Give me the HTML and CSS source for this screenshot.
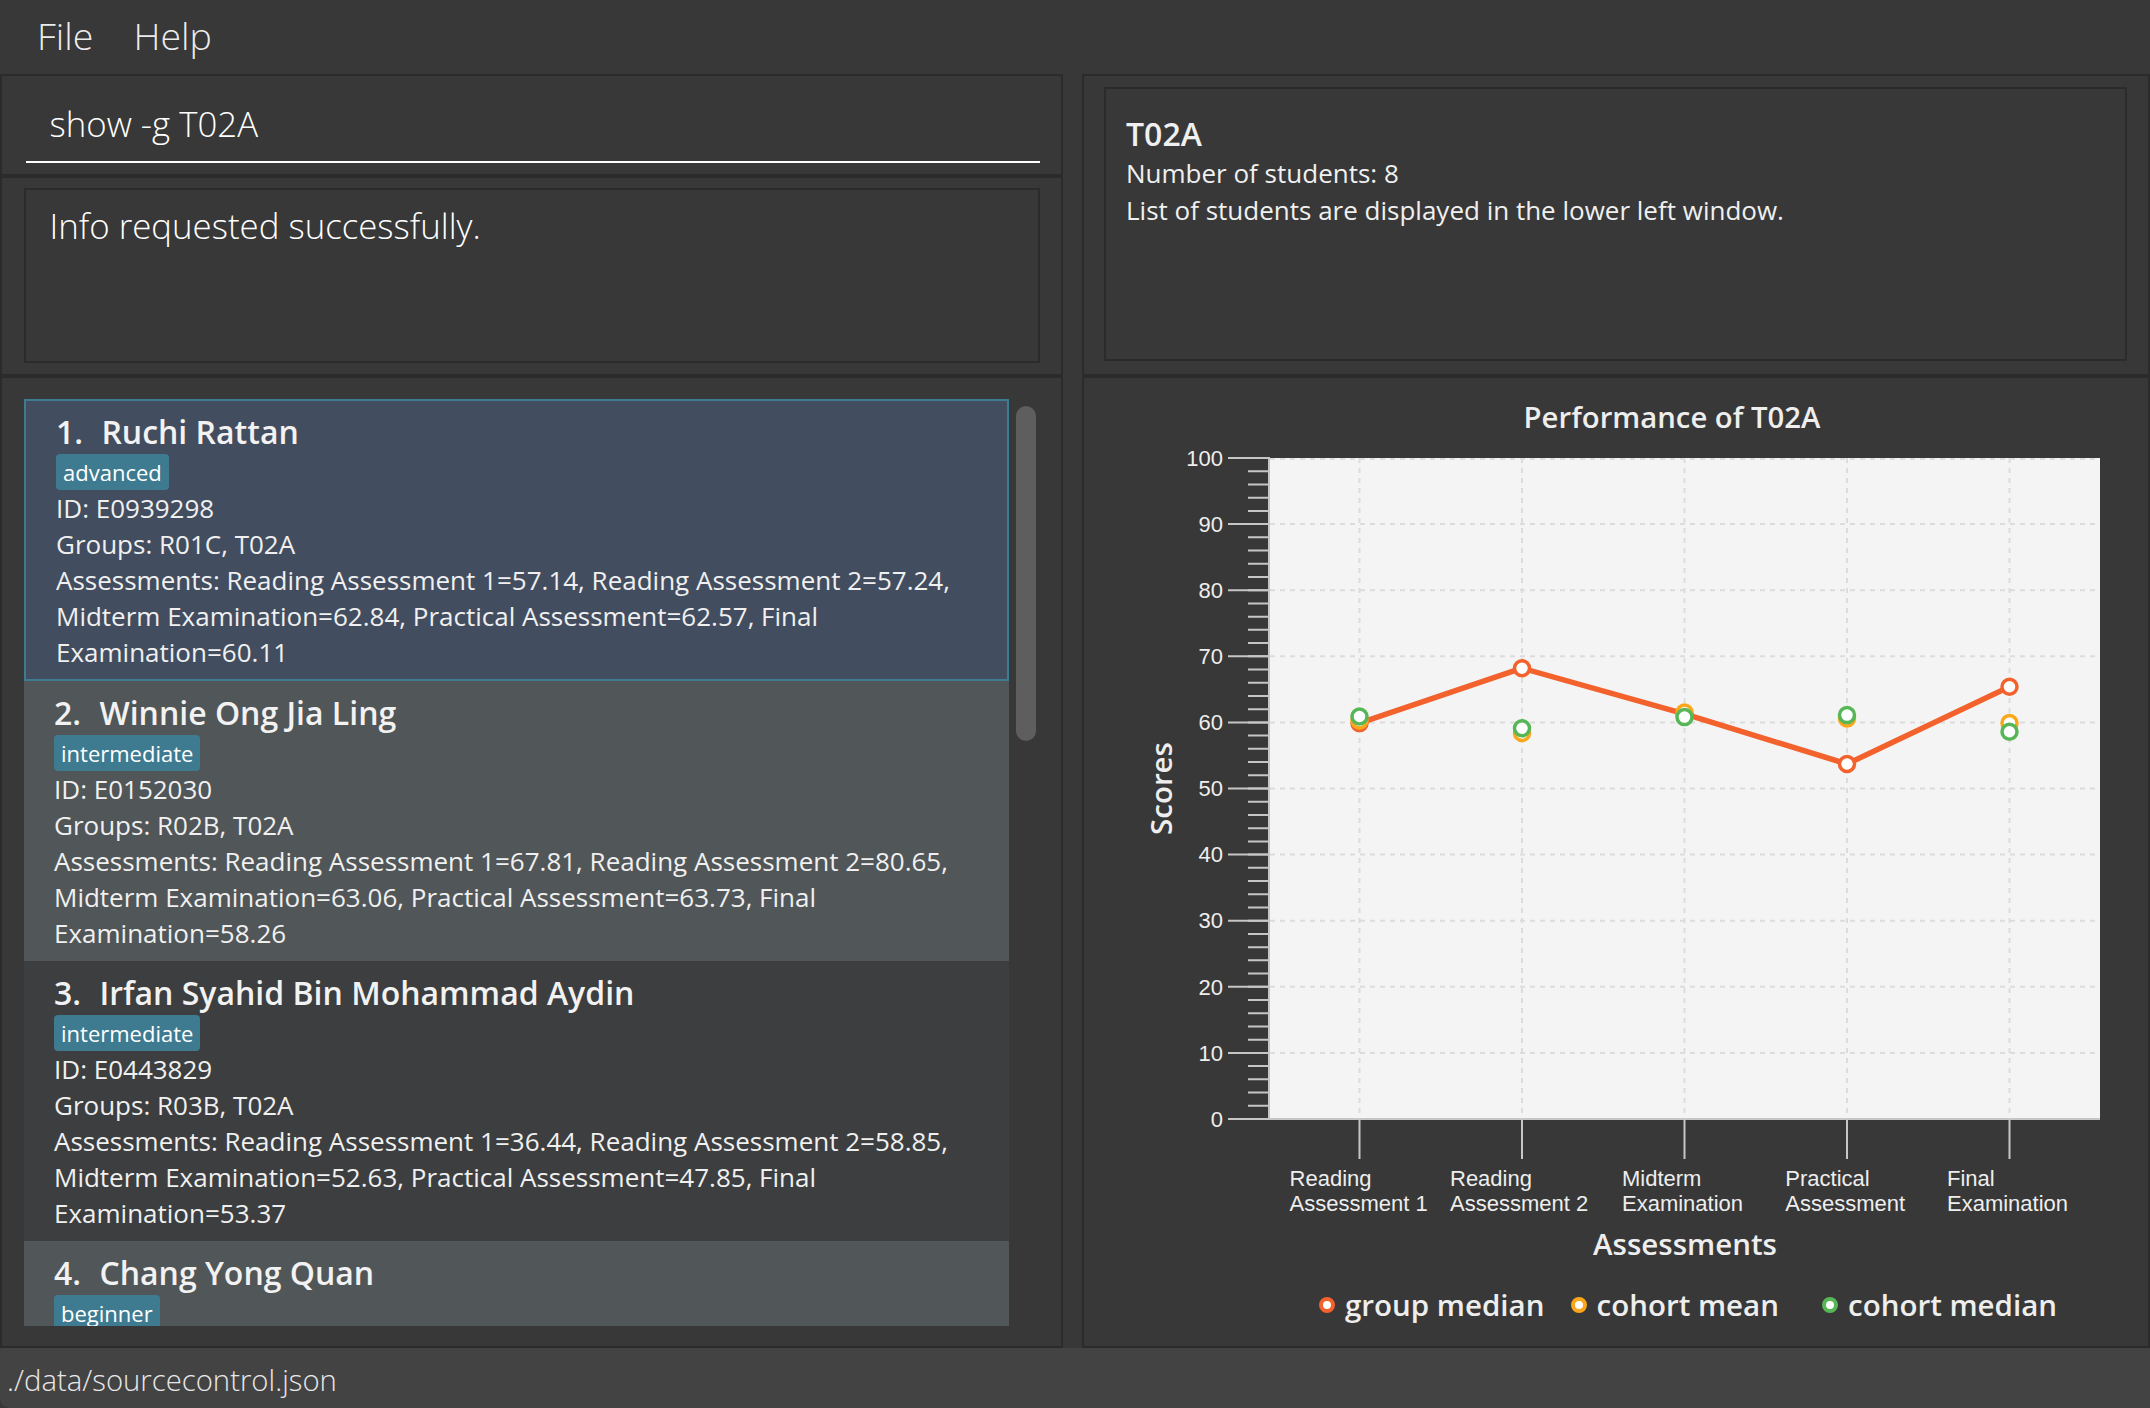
FILE: index.html
```html
<!DOCTYPE html>
<html>
<head>
<meta charset="utf-8">
<title>Source Control</title>
<link rel="stylesheet" href="styles.css">
</head>
<body>
<div class="app">
  <div class="menubar">
    <span class="menu-item">File</span>
    <span class="menu-item">Help</span>
  </div>
  <div class="main">
    <div class="left-col">
      <div class="pane cmd-pane">
        <div class="cmd-input">show -g T02A</div>
      </div>
      <div class="pane result-pane">
        <div class="result-box">Info requested successfully.</div>
      </div>
      <div class="pane list-pane">
        <div class="list-view">
          <div class="cards">
            <div class="card selected">
              <div class="card-name"><span class="idx">1. </span><span class="nm">Ruchi Rattan</span></div>
              <div class="tags"><span class="tag">advanced</span></div>
              <div class="card-line">ID: E0939298</div>
              <div class="card-line">Groups: R01C, T02A</div>
              <div class="card-line">Assessments: Reading Assessment 1=57.14, Reading Assessment 2=57.24,<br>Midterm Examination=62.84, Practical Assessment=62.57, Final<br>Examination=60.11</div>
            </div>
            <div class="card odd">
              <div class="card-name"><span class="idx">2. </span><span class="nm">Winnie Ong Jia Ling</span></div>
              <div class="tags"><span class="tag">intermediate</span></div>
              <div class="card-line">ID: E0152030</div>
              <div class="card-line">Groups: R02B, T02A</div>
              <div class="card-line">Assessments: Reading Assessment 1=67.81, Reading Assessment 2=80.65,<br>Midterm Examination=63.06, Practical Assessment=63.73, Final<br>Examination=58.26</div>
            </div>
            <div class="card even">
              <div class="card-name"><span class="idx">3. </span><span class="nm">Irfan Syahid Bin Mohammad Aydin</span></div>
              <div class="tags"><span class="tag">intermediate</span></div>
              <div class="card-line">ID: E0443829</div>
              <div class="card-line">Groups: R03B, T02A</div>
              <div class="card-line">Assessments: Reading Assessment 1=36.44, Reading Assessment 2=58.85,<br>Midterm Examination=52.63, Practical Assessment=47.85, Final<br>Examination=53.37</div>
            </div>
            <div class="card odd">
              <div class="card-name"><span class="idx">4. </span><span class="nm">Chang Yong Quan</span></div>
              <div class="tags"><span class="tag">beginner</span></div>
            </div>
          </div>
          <div class="scroll-track"><div class="scroll-thumb"></div></div>
        </div>
      </div>
    </div>
    <div class="right-col">
      <div class="pane info-pane">
        <div class="info-box">
          <div class="info-title">T02A</div>
          <div class="info-line">Number of students: 8</div>
          <div class="info-line">List of students are displayed in the lower left window.</div>
        </div>
      </div>
      <div class="pane chart-pane">
        <div class="chart-title">Performance of T02A</div>
        <svg class="chart-svg" width="1064" height="833" viewBox="0 0 1064 833" xmlns="http://www.w3.org/2000/svg">
          <rect x="186" y="21" width="830" height="661" fill="#f4f4f4"/>
          <g stroke="#dcdcdc" stroke-width="2" stroke-dasharray="5 5">
            <line x1="186" y1="615.9" x2="1016" y2="615.9"/>
            <line x1="186" y1="549.8" x2="1016" y2="549.8"/>
            <line x1="186" y1="483.7" x2="1016" y2="483.7"/>
            <line x1="186" y1="417.6" x2="1016" y2="417.6"/>
            <line x1="186" y1="351.5" x2="1016" y2="351.5"/>
            <line x1="186" y1="285.4" x2="1016" y2="285.4"/>
            <line x1="186" y1="219.3" x2="1016" y2="219.3"/>
            <line x1="186" y1="153.2" x2="1016" y2="153.2"/>
            <line x1="186" y1="87.1" x2="1016" y2="87.1"/>
            <line x1="186" y1="22" x2="1016" y2="22"/>
            <line x1="275.5" y1="21" x2="275.5" y2="682"/>
            <line x1="438" y1="21" x2="438" y2="682"/>
            <line x1="600.5" y1="21" x2="600.5" y2="682"/>
            <line x1="763" y1="21" x2="763" y2="682"/>
            <line x1="925.5" y1="21" x2="925.5" y2="682"/>
          </g>
          <g stroke="#c6c6c6" stroke-width="2">
            <line x1="175" y1="682" x2="175" y2="20" stroke-width="22" stroke-dasharray="2 11.22" stroke-dashoffset="1"/>
            <line x1="144" y1="682" x2="186" y2="682"/>
            <line x1="144" y1="615.9" x2="186" y2="615.9"/>
            <line x1="144" y1="549.8" x2="186" y2="549.8"/>
            <line x1="144" y1="483.7" x2="186" y2="483.7"/>
            <line x1="144" y1="417.6" x2="186" y2="417.6"/>
            <line x1="144" y1="351.5" x2="186" y2="351.5"/>
            <line x1="144" y1="285.4" x2="186" y2="285.4"/>
            <line x1="144" y1="219.3" x2="186" y2="219.3"/>
            <line x1="144" y1="153.2" x2="186" y2="153.2"/>
            <line x1="144" y1="87.1" x2="186" y2="87.1"/>
            <line x1="144" y1="21" x2="186" y2="21"/>
            <line x1="185" y1="20" x2="185" y2="683"/>
            <line x1="184" y1="682" x2="1016" y2="682"/>
            <line x1="275.5" y1="682" x2="275.5" y2="722"/>
            <line x1="438" y1="682" x2="438" y2="722"/>
            <line x1="600.5" y1="682" x2="600.5" y2="722"/>
            <line x1="763" y1="682" x2="763" y2="722"/>
            <line x1="925.5" y1="682" x2="925.5" y2="722"/>
          </g>
          <g class="tick-label" text-anchor="end">
            <text x="139" y="689.7">0</text>
            <text x="139" y="623.6">10</text>
            <text x="139" y="557.5">20</text>
            <text x="139" y="491.4">30</text>
            <text x="139" y="425.3">40</text>
            <text x="139" y="359.2">50</text>
            <text x="139" y="293.1">60</text>
            <text x="139" y="227">70</text>
            <text x="139" y="160.9">80</text>
            <text x="139" y="94.8">90</text>
            <text x="139" y="28.7">100</text>
          </g>
          <g class="tick-label">
            <text x="205.6" y="748.5">Reading</text>
            <text x="205.6" y="774">Assessment 1</text>
            <text x="366" y="748.5">Reading</text>
            <text x="366" y="774">Assessment 2</text>
            <text x="538" y="748.5">Midterm</text>
            <text x="538" y="774">Examination</text>
            <text x="701.3" y="748.5">Practical</text>
            <text x="701.3" y="774">Assessment</text>
            <text x="863" y="748.5">Final</text>
            <text x="863" y="774">Examination</text>
          </g>
          <text class="axis-label" x="601" y="818" text-anchor="middle">Assessments</text>
          <text class="axis-label" x="88" y="351.5" text-anchor="middle" transform="rotate(-90 88 351.5)">Scores</text>
          <polyline points="275.5,286.1 438,231.2 600.5,276.8 763,327 925.5,249.7" fill="none" stroke="#f3622d" stroke-width="5.5" stroke-linejoin="round"/>
          <g fill="#ffffff" stroke-width="3.5">
            <g stroke="#f3622d">
              <circle cx="275.5" cy="286.1" r="7.5"/>
              <circle cx="438" cy="231.2" r="7.5"/>
              <circle cx="600.5" cy="276.8" r="7.5"/>
              <circle cx="763" cy="327" r="7.5"/>
              <circle cx="925.5" cy="249.7" r="7.5"/>
            </g>
            <g stroke="#fba71b">
              <circle cx="275.5" cy="283.4" r="7.5"/>
              <circle cx="438" cy="296" r="7.5"/>
              <circle cx="600.5" cy="275.5" r="7.5"/>
              <circle cx="763" cy="281.4" r="7.5"/>
              <circle cx="925.5" cy="286.1" r="7.5"/>
            </g>
            <g stroke="#57b757">
              <circle cx="275.5" cy="279.5" r="7.5"/>
              <circle cx="438" cy="291.3" r="7.5"/>
              <circle cx="600.5" cy="280.1" r="7.5"/>
              <circle cx="763" cy="278.1" r="7.5"/>
              <circle cx="925.5" cy="294.7" r="7.5"/>
            </g>
          </g>
        </svg>
        <div class="legend">
          <div class="legend-item"><span class="legend-dot dot-orange"></span><span>group median</span></div>
          <div class="legend-item"><span class="legend-dot dot-yellow"></span><span>cohort mean</span></div>
          <div class="legend-item"><span class="legend-dot dot-green"></span><span>cohort median</span></div>
        </div>
      </div>
    </div>
  </div>
  <div class="statusbar">./data/sourcecontrol.json</div>
</div>
</body>
</html>
```
FILE: styles.css
```css
* {
  box-sizing: border-box;
}

html,
body {
  margin: 0;
  padding: 0;
}

body {
  width: 2150px;
  height: 1408px;
  overflow: hidden;
  background: #2b2b2b;
  font-family: "Open Sans", "Noto Sans", sans-serif;
  color: #ffffff;
}

.app {
  width: 2150px;
  height: 1408px;
  display: flex;
  flex-direction: column;
  background: #383838;
  overflow: hidden;
}

/* menu bar */
.menubar {
  flex: none;
  height: 74px;
  display: flex;
  align-items: center;
  padding-left: 17px;
  padding-bottom: 2px;
  background: #383838;
}

.menu-item {
  font-size: 37.5px;
  font-weight: 300;
  line-height: 50px;
  padding: 0 20px;
  color: rgba(255, 255, 255, 0.92);
}

/* main area */
.main {
  flex: none;
  height: 1274px;
  display: flex;
}

.pane {
  border: 2px solid #2b2b2b;
  background: #383838;
}

.left-col {
  flex: none;
  width: 1063px;
  height: 1274px;
  display: flex;
  flex-direction: column;
}

.cmd-pane {
  flex: none;
  height: 102px;
  padding: 24px 21px 0 24px;
}

.cmd-input {
  font-size: 34.8px;
  font-weight: 300;
  line-height: 48px;
  padding: 0 0 13px 23.5px;
  border-bottom: 2px solid #ffffff;
  white-space: nowrap;
}

.result-pane {
  flex: none;
  height: 200px;
  padding: 10px 21px 0 22px;
}

.result-box {
  height: 175px;
  border: 2px solid #2b2b2b;
  padding: 12px 22px 12px 23.5px;
  font-size: 34.8px;
  font-weight: 300;
  line-height: 48px;
}

.list-pane {
  flex: 1 1 0;
  min-height: 0;
  padding: 21px 22px 20px 22px;
}

.list-view {
  height: 927px;
  display: flex;
  overflow: hidden;
}

.cards {
  flex: none;
  width: 985px;
  height: 927px;
  overflow: hidden;
}

.card {
  height: 280px;
  padding: 10px 20px 10px 30px;
  background: #3c3e3f;
  white-space: nowrap;
  overflow: hidden;
}

.card.odd {
  background: #515658;
}

.card.even {
  background: #3c3e3f;
}

.card.selected {
  height: 282px;
  padding: 9px 18px 9px 30px;
  background: #424d5f;
  border: 2px solid #3e7b91;
}

.card-name {
  font-size: 32px;
  font-weight: 600;
  line-height: 44px;
  color: #f2f2f2;
}

.card-name .nm {
  margin-left: 10px;
}

.tags {
  height: 36px;
  display: flex;
}

.tag {
  background: #3e7b91;
  border-radius: 4px;
  font-size: 22px;
  line-height: 32px;
  padding: 2px 7px;
  color: #ffffff;
}

.card-line {
  font-size: 26px;
  line-height: 36px;
  color: #f0f0f0;
}

.scroll-track {
  flex: none;
  width: 30px;
  padding: 7px 0 0 7px;
}

.scroll-thumb {
  width: 20px;
  height: 335px;
  border-radius: 10px;
  background: #5e5e5e;
}

/* right column */
.right-col {
  flex: 1;
  height: 1274px;
  margin-left: 19px;
  display: flex;
  flex-direction: column;
}

.info-pane {
  flex: none;
  height: 302px;
  padding: 11px 21px 0 20px;
}

.info-box {
  height: 274px;
  border: 2px solid #2b2b2b;
  padding: 23px 20px;
  color: #f0f0f0;
}

.info-title {
  font-size: 32px;
  font-weight: 600;
  line-height: 43px;
}

.info-line {
  font-size: 26px;
  line-height: 37px;
}

.chart-pane {
  flex: 1 1 0;
  min-height: 0;
  padding-top: 19px;
  overflow: hidden;
}

.chart-title {
  font-size: 29.3px;
  font-weight: 600;
  line-height: 40px;
  text-align: center;
  padding-left: 112px;
  color: #eeeeee;
}

.chart-svg {
  display: block;
}

.tick-label {
  font-family: "Liberation Sans", Arial, sans-serif;
  font-size: 22px;
  fill: #eeeeee;
}

.axis-label {
  font-family: "Open Sans", sans-serif;
  font-size: 29.5px;
  font-weight: 600;
  fill: #eeeeee;
}

.legend {
  display: grid;
  grid-template-columns: repeat(3, 232px);
  column-gap: 19.5px;
  margin-top: 16px;
  padding-left: 235px;
}

.legend-item {
  display: flex;
  align-items: center;
  gap: 10px;
  font-size: 29.5px;
  font-weight: 600;
  line-height: 38px;
  color: #eeeeee;
  white-space: nowrap;
}

.legend-dot {
  width: 16px;
  height: 16px;
  border-radius: 50%;
  border: 4px solid;
  background: #ffffff;
  flex: none;
}

.dot-orange {
  border-color: #f3622d;
}

.dot-yellow {
  border-color: #fba71b;
}

.dot-green {
  border-color: #57b757;
}

/* status bar */
.statusbar {
  flex: none;
  height: 60px;
  padding: 4px 0 0 7px;
  font-size: 29.3px;
  font-weight: 300;
  line-height: 56px;
  background: #434343;
  color: #e8e8e8;
  border-bottom-left-radius: 10px;
}
```
